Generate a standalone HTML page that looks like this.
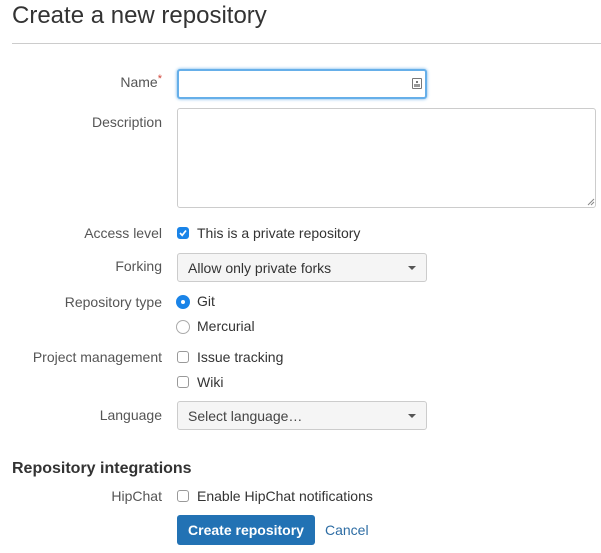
<!DOCTYPE html>
<html><head><meta charset="utf-8"><style>
*{box-sizing:border-box;margin:0;padding:0}
body{width:601px;height:553px;background:#fff;font-family:"Liberation Sans",Arial,sans-serif;font-size:14px;color:#333;position:relative;overflow:hidden}
.a{position:absolute;white-space:nowrap}
.lbl{position:absolute;right:439px;color:#555;text-align:right}
h1{position:absolute;left:12px;top:2px;font-size:24px;font-weight:normal;color:#333}
.hr{position:absolute;left:12px;right:0;top:43px;height:1px;background:#ccc}
.inp{position:absolute;border:1px solid #ccc;border-radius:3px;background:#fff}
.sel{position:absolute;left:177px;width:250px;height:29px;border:1px solid #ccc;border-radius:3px;background:#f5f5f5;padding:6px 10px;color:#333}
.caret{position:absolute;right:10px;top:12px;width:0;height:0;border-left:4px solid transparent;border-right:4px solid transparent;border-top:4px solid #555}
.cb{position:absolute;left:177px;width:12px;height:12px;border:1px solid #999;border-radius:3px;background:#fff}
.rd{position:absolute;left:176px;width:14px;height:14px;border:1px solid #aaa;border-radius:50%;background:#fff}
.t{position:absolute;left:197px;color:#333}
</style></head><body>
<h1>Create a new repository</h1>
<div class="hr"></div>

<div class="lbl" style="top:74px">Name<span style="color:#d04437;font-size:11px;position:relative;top:-5px">*</span></div>
<div class="inp" style="left:177px;top:69px;width:250px;height:30px;border:2px solid #66afe9;box-shadow:0 0 3px #66afe9"></div>
<div class="a" style="left:412px;top:78px;width:10px;height:11px;border:1px solid #777;border-radius:1px"><div style="position:absolute;left:3px;top:2px;width:2px;height:2px;background:#777"></div><div style="position:absolute;left:1px;top:5px;width:6px;height:3px;background:#999"></div></div>

<div class="lbl" style="top:114px">Description</div>
<div class="inp" style="left:177px;top:108px;width:419px;height:100px"></div>
<svg class="a" style="left:587px;top:198px" width="8" height="8"><path d="M1 7L7 1M4 7L7 4" stroke="#888" stroke-width="1"/></svg>

<div class="lbl" style="top:225px">Access level</div>
<div class="cb" style="top:227px;background:#1a84e8;border-color:#1a84e8"><svg width="10" height="10" style="position:absolute;left:0;top:0"><path d="M2 5L4.2 7.3L8 2.5" stroke="#fff" stroke-width="1.7" fill="none"/></svg></div>
<div class="t" style="top:225px">This is a private repository</div>

<div class="lbl" style="top:258px">Forking</div>
<div class="sel" style="top:253px">Allow only private forks<div class="caret"></div></div>

<div class="lbl" style="top:294px">Repository type</div>
<div class="rd" style="top:295px;background:#1a84e8;border-color:#1a84e8"><div style="position:absolute;left:4px;top:4px;width:4px;height:4px;border-radius:50%;background:#fff"></div></div>
<div class="t" style="top:293px">Git</div>
<div class="rd" style="top:320px"></div>
<div class="t" style="top:318px">Mercurial</div>

<div class="lbl" style="top:349px">Project management</div>
<div class="cb" style="top:351px"></div>
<div class="t" style="top:349px">Issue tracking</div>
<div class="cb" style="top:376px"></div>
<div class="t" style="top:374px">Wiki</div>

<div class="lbl" style="top:407px">Language</div>
<div class="sel" style="top:401px;color:#444">Select language…<div class="caret"></div></div>

<div class="a" style="left:12px;top:460px;font-size:16px;font-weight:bold;color:#333">Repository integrations</div>

<div class="lbl" style="top:488px">HipChat</div>
<div class="cb" style="top:490px"></div>
<div class="t" style="top:488px">Enable HipChat notifications</div>

<div class="a" style="left:177px;top:515px;width:138px;height:30px;background:#2272b4;border-radius:3px;color:#fff;font-weight:bold;text-align:center;line-height:30px">Create repository</div>
<div class="a" style="left:325px;top:522px;color:#2e6da4">Cancel</div>
</body></html>
